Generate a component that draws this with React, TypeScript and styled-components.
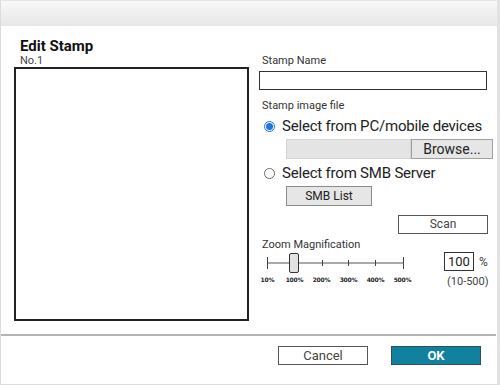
import React from "react";
import styled, { createGlobalStyle } from "styled-components";

const Global = createGlobalStyle`
  html, body { margin: 0; padding: 0; background: #fff; }
  * { box-sizing: border-box; }
  body { font-family: "Roboto", "Liberation Sans", sans-serif; color: #222; }
`;

const Window = styled.div`
  width: 500px;
  height: 385px;
  display: flex;
  flex-direction: column;
  border-left: 1px solid #dcdcdc;
  border-right: 3px solid #e2e2e2;
  border-bottom: 1px solid #dcdcdc;
  border-top: 1px solid #e4e4e4;
  background: #fff;
`;

const TitleBar = styled.div`
  height: 25px;
  flex: none;
  background: linear-gradient(#f8f8f8, #e7e7e7);
`;

const Main = styled.div`
  flex: 1;
  display: flex;
  gap: 10px;
  padding-left: 13px;
`;

const LeftCol = styled.div`
  width: 235px;
  display: flex;
  flex-direction: column;
`;

const Title = styled.div`
  margin-top: 11px;
  margin-left: 6px;
  font-size: 15px;
  font-weight: 700;
  line-height: 18px;
  color: #111;
`;

const Sub = styled.div`
  margin-left: 6px;
  font-size: 11px;
  line-height: 12px;
  color: #444;
`;

const Preview = styled.div`
  width: 235px;
  height: 254px;
  border: 2px solid #222;
  background: #fff;
`;

const RightCol = styled.div`
  width: 234px;
  display: flex;
  flex-direction: column;
  padding-top: 28px;
`;

const Label = styled.div<{ $mt?: number }>`
  font-size: 11px;
  line-height: 13px;
  color: #333;
  margin-left: 3px;
  margin-top: ${(p) => p.$mt ?? 0}px;
`;

const TextInput = styled.div`
  margin-top: 4px;
  width: 228px;
  height: 19px;
  border: 1px solid #333;
  background: #fff;
`;

const RadioRow = styled.div<{ $mt?: number }>`
  display: flex;
  align-items: center;
  gap: 7px;
  margin-left: 5px;
  margin-top: ${(p) => p.$mt ?? 0}px;
  font-size: 15px;
  line-height: 17px;
  color: #222;
  letter-spacing: -0.2px;
`;

const RadioDot = styled.span<{ $on?: boolean }>`
  width: 11px;
  height: 11px;
  border-radius: 50%;
  flex: none;
  border: 1px solid ${(p) => (p.$on ? "#1f74e0" : "#6a6a6a")};
  background: #fff;
  display: flex;
  align-items: center;
  justify-content: center;
  &::after {
    content: "";
    width: 7px;
    height: 7px;
    border-radius: 50%;
    background: ${(p) => (p.$on ? "#1f74e0" : "transparent")};
  }
`;

const FileRow = styled.div`
  display: flex;
  margin-left: 27px;
  margin-top: 4px;
  height: 20px;
`;

const FileField = styled.div`
  width: 125px;
  background: #e4e4e4;
  border: 1px solid #d4d4d4;
`;

const GrayButton = styled.div<{ $w: number; $ml?: number; $mt?: number }>`
  width: ${(p) => p.$w}px;
  height: 20px;
  margin-left: ${(p) => p.$ml ?? 0}px;
  margin-top: ${(p) => p.$mt ?? 0}px;
  background: #e6e6e6;
  border: 1px solid #8a8a8a;
  font-size: 12px;
  line-height: 18px;
  text-align: center;
  color: #222;
`;

const BrowseButton = styled(GrayButton)`
  font-size: 14px;
  border-color: #a0a0a0;
`;

const WhiteButton = styled.div<{ $w: number }>`
  width: ${(p) => p.$w}px;
  height: 19px;
  background: #fff;
  border: 1px solid #555;
  font-size: 12px;
  line-height: 17px;
  text-align: center;
  color: #444;
`;

const ScanRow = styled.div`
  display: flex;
  justify-content: flex-end;
  padding-right: 5px;
  margin-top: 9px;
`;

const ZoomRow = styled.div`
  display: flex;
  align-items: flex-start;
  margin-top: 1px;
`;

const SliderBox = styled.div`
  display: flex;
  flex-direction: column;
  width: 168px;
`;

const TickLabels = styled.div`
  display: grid;
  grid-template-columns: repeat(6, 27px);
  margin-left: -5px;
  margin-top: 2px;
  font-size: 6px;
  font-weight: 700;
  font-family: "DejaVu Sans", sans-serif;
  line-height: 7px;
  color: #222;
  text-align: center;
  letter-spacing: -0.2px;
`;

const PctBox = styled.div`
  display: flex;
  flex-direction: column;
  align-items: flex-start;
  margin-left: 17px;
`;

const PctTop = styled.div`
  display: flex;
  align-items: center;
  gap: 5px;
  font-size: 12px;
  color: #444;
`;

const NumInput = styled.div`
  width: 30px;
  height: 19px;
  border: 1px solid #333;
  font-size: 13px;
  line-height: 17px;
  padding-left: 3px;
  color: #222;
`;

const Range = styled.div`
  font-size: 11px;
  line-height: 13px;
  color: #444;
  margin-top: 4px;
  margin-left: 3px;
`;

const Footer = styled.div`
  flex: none;
  height: 50px;
  border-top: 2px solid #b3b3b3;
  margin-right: 1px;
  display: flex;
  justify-content: flex-end;
  align-items: flex-start;
  gap: 23px;
  padding: 10px 15px 0 0;
`;

const OkButton = styled.div`
  width: 90px;
  height: 19px;
  background: #10819f;
  border: 1px solid #2e4f5a;
  color: #fff;
  font-size: 13px;
  font-weight: 700;
  line-height: 17px;
  text-align: center;
`;

const CancelButton = styled(WhiteButton)`
  font-size: 13px;
`;

function Slider() {
  const ticks = [0, 27, 55, 81, 108, 136];
  return (
    <svg width="150" height="22" viewBox="0 0 150 22">
      <line x1="8" y1="11" x2="144" y2="11" stroke="#555" strokeWidth="1" />
      {ticks.map((t, i) => (
        <line
          key={i}
          x1={8 + t + 0.5}
          x2={8 + t + 0.5}
          y1={i === 0 || i === 5 ? 5 : 8}
          y2={i === 0 || i === 5 ? 17 : 14}
          stroke="#444"
          strokeWidth="1"
        />
      ))}
      <rect x="30.5" y="1.5" width="9" height="19" rx="1.5" fill="#e2e2e2" stroke="#333" strokeWidth="1" />
    </svg>
  );
}

export default function App() {
  return (
    <>
      <Global />
      <Window>
        <TitleBar />
        <Main>
          <LeftCol>
            <Title>Edit Stamp</Title>
            <Sub>No.1</Sub>
            <Preview />
          </LeftCol>
          <RightCol>
            <Label>Stamp Name</Label>
            <TextInput />
            <Label $mt={9}>Stamp image file</Label>
            <RadioRow $mt={6}>
              <RadioDot $on />
              Select from PC/mobile devices
            </RadioRow>
            <FileRow>
              <FileField />
              <BrowseButton $w={82}>Browse...</BrowseButton>
            </FileRow>
            <RadioRow $mt={6}>
              <RadioDot />
              Select from SMB Server
            </RadioRow>
            <GrayButton $w={86} $ml={27} $mt={4}>SMB List</GrayButton>
            <ScanRow>
              <WhiteButton $w={90}>Scan</WhiteButton>
            </ScanRow>
            <Label $mt={4}>Zoom Magnification</Label>
            <ZoomRow>
              <SliderBox>
                <Slider />
                <TickLabels>
                  <span>10%</span>
                  <span>100%</span>
                  <span>200%</span>
                  <span>300%</span>
                  <span>400%</span>
                  <span>500%</span>
                </TickLabels>
              </SliderBox>
              <PctBox>
                <PctTop>
                  <NumInput>100</NumInput>%
                </PctTop>
                <Range>(10-500)</Range>
              </PctBox>
            </ZoomRow>
          </RightCol>
        </Main>
        <Footer>
          <CancelButton $w={90}>Cancel</CancelButton>
          <OkButton>OK</OkButton>
        </Footer>
      </Window>
    </>
  );
}
